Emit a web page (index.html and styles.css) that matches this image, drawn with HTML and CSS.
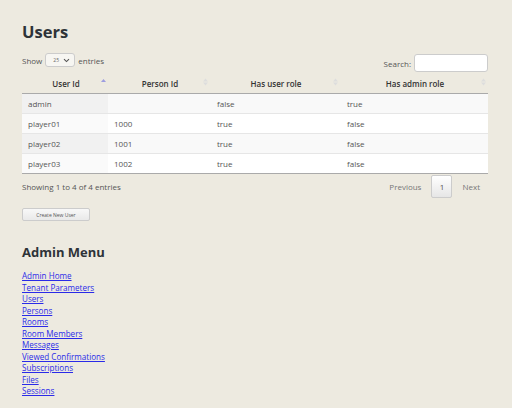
FILE: index.html
```html
<!DOCTYPE html>
<html>
<head>
<meta charset="utf-8">
<link rel="stylesheet" href="styles.css">
</head>
<body>
<div class="page">
  <h1 class="title">Users</h1>
  <div class="controls">
    <div class="length">Show <span class="select">25 <svg width="7" height="5" viewBox="0 0 7 5"><path d="M1 1.2 L3.5 3.6 L6 1.2" fill="none" stroke="#555" stroke-width="1.1"/></svg></span> entries</div>
    <div class="search">Search: <span class="input"></span></div>
  </div>
  <table class="grid">
    <thead>
      <tr>
        <th class="c1">User Id<span class="sort asc"><svg width="5" height="10" viewBox="0 0 5 10"><path d="M0 5 L2.5 2 L5 5 Z" fill="#9d9de0"/></svg></span></th>
        <th class="c2">Person Id<span class="sort"><svg width="5" height="10" viewBox="0 0 5 10"><path d="M0 4.5 L2.5 1.5 L5 4.5 Z M0 5.5 L2.5 8.5 L5 5.5 Z" fill="#ddd"/></svg></span></th>
        <th class="c3">Has user role<span class="sort"><svg width="5" height="10" viewBox="0 0 5 10"><path d="M0 4.5 L2.5 1.5 L5 4.5 Z M0 5.5 L2.5 8.5 L5 5.5 Z" fill="#ddd"/></svg></span></th>
        <th class="c4">Has admin role<span class="sort"><svg width="5" height="10" viewBox="0 0 5 10"><path d="M0 4.5 L2.5 1.5 L5 4.5 Z M0 5.5 L2.5 8.5 L5 5.5 Z" fill="#ddd"/></svg></span></th>
      </tr>
    </thead>
    <tbody>
      <tr class="odd"><td class="sorted">admin</td><td></td><td>false</td><td>true</td></tr>
      <tr class="even"><td class="sorted">player01</td><td>1000</td><td>true</td><td>false</td></tr>
      <tr class="odd"><td class="sorted">player02</td><td>1001</td><td>true</td><td>false</td></tr>
      <tr class="even"><td class="sorted">player03</td><td>1002</td><td>true</td><td>false</td></tr>
    </tbody>
  </table>
  <div class="footer">
    <div class="info">Showing 1 to 4 of 4 entries</div>
    <div class="paging"><span class="pg">Previous</span><span class="pg current">1</span><span class="pg">Next</span></div>
  </div>
  <button class="btn">Create New User</button>
  <h2 class="menu-title">Admin Menu</h2>
  <ul class="menu">
    <li><a href="#">Admin Home</a></li>
    <li><a href="#">Tenant Parameters</a></li>
    <li><a href="#">Users</a></li>
    <li><a href="#">Persons</a></li>
    <li><a href="#">Rooms</a></li>
    <li><a href="#">Room Members</a></li>
    <li><a href="#">Messages</a></li>
    <li><a href="#">Viewed Confirmations</a></li>
    <li><a href="#">Subscriptions</a></li>
    <li><a href="#">Files</a></li>
    <li><a href="#">Sessions</a></li>
  </ul>
</div>
</body>
</html>
```

FILE: styles.css
```css
html, body {
  margin: 0;
  padding: 0;
  background: #edeae0;
}
body {
  font-family: "Open Sans", "Liberation Sans", sans-serif;
  color: #333;
}
.page {
  width: 466px;
  padding: 20px 0 0 22px;
}
.title {
  margin: 0;
  font-size: 16.5px;
  font-weight: 700;
  color: #2e3338;
  line-height: 24px;
}
.controls {
  display: flex;
  justify-content: space-between;
  align-items: flex-end;
  margin-top: 9px;
  font-size: 8px;
  color: #555;
}
.length {
  display: flex;
  align-items: center;
  gap: 3px;
  margin-bottom: 5px;
}
.select {
  display: inline-flex;
  align-items: center;
  justify-content: space-between;
  box-sizing: border-box;
  width: 30px;
  height: 14px;
  padding: 0 4px 0 7px;
  border: 1px solid #ccc;
  border-radius: 3px;
  background: #f7f6f2;
  font-size: 5px;
  color: #666;
}
.search {
  display: flex;
  align-items: center;
  gap: 3px;
}
.input {
  display: inline-block;
  box-sizing: border-box;
  width: 74px;
  height: 18px;
  background: #fff;
  border: 1px solid #ccc;
  border-radius: 3px;
}
.grid {
  width: 466px;
  margin-top: 2px;
  border-collapse: collapse;
  font-size: 8px;
}
.grid th {
  height: 19px;
  padding: 0 8px 0 10px;
  font-weight: 600;
  color: #333;
  text-align: center;
  position: relative;
  border-bottom: 1.5px solid #aaa;
}
.grid th .sort {
  position: absolute;
  right: 2px;
  top: 3px;
}
.c1 { width: 86px; box-sizing: border-box; }
.c2 { width: 102px; box-sizing: border-box; }
.c3 { width: 130px; box-sizing: border-box; }
.grid td {
  height: 19px;
  padding: 0 6px;
  color: #555;
  border-top: 1px solid #e6e6e6;
}
.grid tbody tr:first-child td { border-top: none; }
.grid tbody tr:last-child td { border-bottom: 1.5px solid #aaa; }
.grid td:nth-child(3), .grid td:nth-child(4) { padding-left: 7px; }
.odd td { background: #f9f9f9; }
.even td { background: #fff; }
.odd td.sorted { background: #f1f1f1; }
.even td.sorted { background: #fafafa; }
.footer {
  display: flex;
  justify-content: space-between;
  align-items: center;
  margin-top: 1px;
  font-size: 8px;
  color: #555;
}
.paging {
  display: flex;
  align-items: center;
}
.pg {
  padding: 0 8px;
  color: #777;
  line-height: 21px;
}
.pg.current {
  box-sizing: border-box;
  width: 21px;
  padding: 0;
  text-align: center;
  margin: 0 2px;
  border: 1px solid #ccc;
  border-radius: 2px;
  background: linear-gradient(#fff, #e6e6e6);
  color: #555;
}
.btn {
  display: block;
  margin-top: 10px;
  box-sizing: border-box;
  width: 68px;
  height: 13px;
  padding: 0;
  font-family: "Open Sans", "Liberation Sans", sans-serif;
  font-size: 5px;
  color: #555;
  background: linear-gradient(#f8f8f8, #e9e9e9);
  border: 1px solid #ccc;
  border-radius: 2px;
}
.menu-title {
  margin: 22px 0 0 0;
  font-size: 13px;
  font-weight: 700;
  color: #2e3338;
  line-height: 18px;
}
.menu {
  list-style: none;
  margin: 9px 0 0 0;
  padding: 0;
  font-size: 8.1px;
  line-height: 11.5px;
}
.menu a {
  color: #2a2ae8;
  text-decoration: underline;
}
```
